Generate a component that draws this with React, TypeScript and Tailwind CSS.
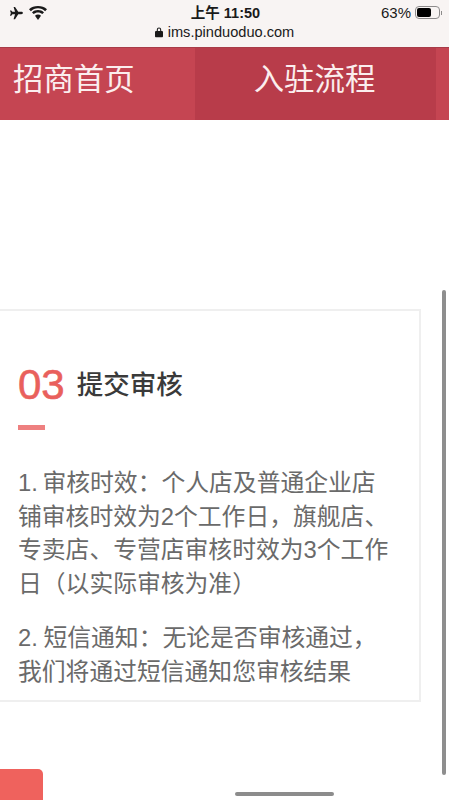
import React from "react";

const font = "font-['Liberation_Sans','Noto_Sans_CJK_SC',sans-serif]";

const StatusBar = () => (
  <div className="flex h-[47px] shrink-0 flex-col bg-[#f8f4f3] text-[#1a1a1a]">
    <div className="grid h-[25px] grid-cols-3 items-center pl-[9px] pr-[7px]">
      <div className="flex items-center gap-[5px]">
        <svg className="h-[14px] w-[15px]" viewBox="0 0 24 24" fill="currentColor">
          <path d="M23 12c0-1.200-1.200-2-2.800-2H15L9.500 1.500H7L9.500 10H5L3 7.500H.8L2.300 12 .8 16.500H3L5 14h4.500L7 22.500h2.500L15 14h5.200c1.600 0 2.800-.8 2.800-2z" />
        </svg>
        <svg className="h-[14px] w-[18px]" viewBox="0 0 18 14" fill="currentColor">
          <path d="M9 2.300c2.800 0 5.300 1.100 7.100 2.900L18 3.300C15.700 1.100 12.500 0 9 0S2.300 1.100 0 3.300l1.900 1.900C3.700 3.400 6.200 2.300 9 2.300z" />
          <path d="M9 6.400c1.700 0 3.200.6 4.300 1.700l1.700-1.700C13.400 4.900 11.300 4.100 9 4.100S4.600 4.900 3 6.400l1.700 1.700C5.800 7 7.300 6.400 9 6.400z" />
          <path d="M9 8.600c-1.200 0-2.200.4-3 1.200L9 14l3-4.200c-.8-.8-1.800-1.200-3-1.200z" />
        </svg>
      </div>
      <span className="justify-self-center whitespace-nowrap text-[14.5px] leading-[18px] font-semibold">上午 11:50</span>
      <div className="flex items-center justify-self-end gap-[4px]">
        <span className="text-[15px] leading-[18px]">63%</span>
        <div className="flex h-[13px] w-[25px] items-center rounded-[4px] border border-[#8d8b8b] p-[1px]">
          <div className="h-full w-[14px] rounded-[2px] bg-black" />
        </div>
        <div className="-ml-[3px] h-[4px] w-[1px] bg-[#8d8b8b]" />
      </div>
    </div>
    <div className="flex h-[22px] items-center justify-center gap-[5px] pb-[8px]">
      <svg className="h-[12px] w-[8px]" viewBox="0 0 9 12" fill="currentColor">
        <path d="M2 5V3.500a2.500 2.500 0 0 1 5 0V5h.800c.600 0 1.200.500 1.200 1.200v4.600c0 .700-.600 1.200-1.200 1.200H1.200C.600 12 0 11.500 0 10.800V6.200C0 5.500.600 5 1.200 5H2zm1.200 0h2.600V3.500a1.300 1.300 0 0 0-2.600 0V5z" />
      </svg>
      <span className="text-[14.6px] leading-[18px]">ims.pinduoduo.com</span>
    </div>
  </div>
);

const NavBar = () => (
  <div className="flex h-[73px] shrink-0 border-t border-[#a83c48] bg-[#c54552] text-[#fbeeee]">
    <div className="flex w-[195px] items-center pb-[9px] pl-[13px] text-[30.4px]">招商首页</div>
    <div className="flex w-[241px] items-center justify-center bg-[#b83c4a] pb-[9px] pr-[2px] text-[30.4px]">入驻流程</div>
  </div>
);

const StepCard = () => (
  <div className="mt-[189px] mr-[28px] h-[393px] border-y-2 border-r-2 border-[#efefef] pl-[18px] pr-[26px] pt-[50px]">
    <div className="flex items-center gap-[12px]">
      <span className="text-[42px] leading-[48px] text-[#e9605c] [-webkit-text-stroke:0.6px_#e9605c]">03</span>
      <span className="text-[26.5px] leading-[32px] font-medium text-[#3a3a3a]">提交审核</span>
    </div>
    <div className="mt-[16px] h-[5px] w-[27px] bg-[#ee8080]" />
    <p className="mt-[36px] text-[23.8px] leading-[33.5px] [word-spacing:-2px] text-[#6a6a6a]">
      1. 审核时效：个人店及普通企业店铺审核时效为2个工作日，旗舰店、专卖店、专营店审核时效为3个工作日（以实际审核为准）
    </p>
    <p className="mt-[21px] text-[23.8px] leading-[33.5px] [word-spacing:-1px] text-[#6a6a6a]">
      2. 短信通知：无论是否审核通过，我们将通过短信通知您审核结果
    </p>
  </div>
);

export default function App() {
  return (
    <div className={`relative flex h-[800px] w-[449px] flex-col overflow-hidden bg-white ${font}`}>
      <StatusBar />
      <NavBar />
      <StepCard />
      {/* scrollbar, home bar and the clipped red button lie over the page */}
      <div className="absolute top-[290px] left-[442px] h-[485px] w-[4px] rounded-full bg-[#8e8e8e]" />
      <div className="absolute top-[792px] left-[235px] h-[4px] w-[99px] rounded-full bg-[#8c8c8c]" />
      <div className="absolute top-[769px] left-0 h-[40px] w-[43px] rounded-tr-[5px] bg-[#ef625d]" />
    </div>
  );
}
